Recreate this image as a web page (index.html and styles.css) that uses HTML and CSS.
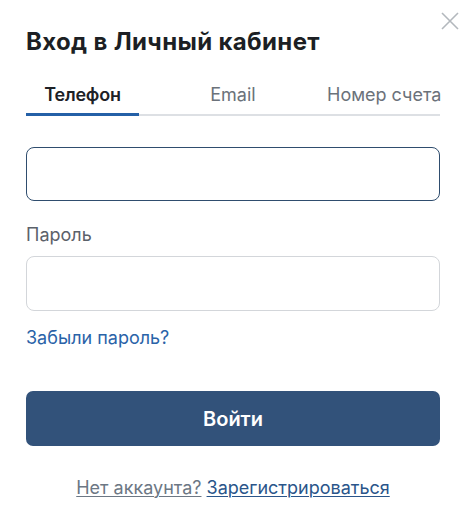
FILE: index.html
```html
<!DOCTYPE html>
<html lang="ru">
<head>
  <meta charset="UTF-8">
  <title>Вход в Личный кабинет</title>
  <meta name="viewport" content="width=device-width,initial-scale=1">
  <link rel="stylesheet" href="styles.css">
</head>
<body>
<div class="modal">
  <button class="close" aria-label="Закрыть">
    <svg width="18" height="18" viewBox="0 0 18 18"><path d="M1 1L17 17M17 1L1 17" stroke="#b3b8bd" stroke-width="1.6" fill="none"/></svg>
  </button>
  <h1>Вход в Личный кабинет</h1>

  <!-- вкладки -->
  <div class="tabs">
    <div class="tab active">Телефон</div>
    <div class="tab">Email</div>
    <div class="tab">Номер счета</div>
  </div>

  <form class="form">
    <input type="tel" class="field focus">
    <label class="label">Пароль</label>
    <input type="password" class="field pass">
    <a href="#" class="forgot">Забыли пароль?</a>
    <button type="button" class="submit">Войти</button>
    <p class="signup"><a href="#" class="muted">Нет аккаунта?</a> <a href="#" class="reg">Зарегистрироваться</a></p>
  </form>
</div>
</body>
</html>
```

FILE: styles.css
```css
*{box-sizing:border-box}
body{margin:0;background:#fff;font-family:Inter,"Noto Sans",Roboto,sans-serif;color:#1c1f24}
.modal{position:relative;padding:26px 28px 0 26px;width:468px}
.close{position:absolute;top:12px;right:9px;padding:0;border:none;background:none;cursor:pointer;width:18px;height:18px}
.close svg{display:block}
h1{margin:0;font-size:24px;line-height:31px;font-weight:700;color:#1c1f24;letter-spacing:.35px}
.tabs{display:grid;grid-template-columns:113px 1fr 113px;margin-top:27px;border-bottom:2px solid #dde0e4}
.tab{text-align:center;font-size:18px;line-height:22px;font-weight:400;color:#6b727a;padding:0 0 7px;margin-bottom:-2px;border-bottom:3px solid transparent;white-space:nowrap;cursor:pointer}
.tab.active{color:#1d2126;font-weight:600;letter-spacing:-.2px;border-bottom-color:#2460a7}
.tab:last-child{text-align:right}
.form{display:flex;flex-direction:column;margin:0}
.field{width:100%;height:54px;border:1px solid #d3d6da;border-radius:8px;font-size:18px;padding:0 16px;background:#fff;outline:none}
.field.focus{margin-top:31px;border-color:#2f4d6e}
.label{margin-top:23px;font-size:18px;line-height:22px;color:#5b616a}
.pass{margin-top:10px;height:55px}
.forgot{margin-top:16px;align-self:flex-start;font-size:18px;line-height:22px;color:#2a63a8;text-decoration:none}
.submit{margin-top:42px;height:55px;border:none;border-radius:7px;background:#32527a;color:#fff;font-family:inherit;font-size:20px;font-weight:600;cursor:pointer}
.signup{margin:31px 0 0;text-align:center;font-size:18px;line-height:22px}
.signup a{text-decoration:underline;text-underline-offset:2px;text-decoration-thickness:1px}
.muted{color:#6c7784}
.reg{color:#2a558a}
```
